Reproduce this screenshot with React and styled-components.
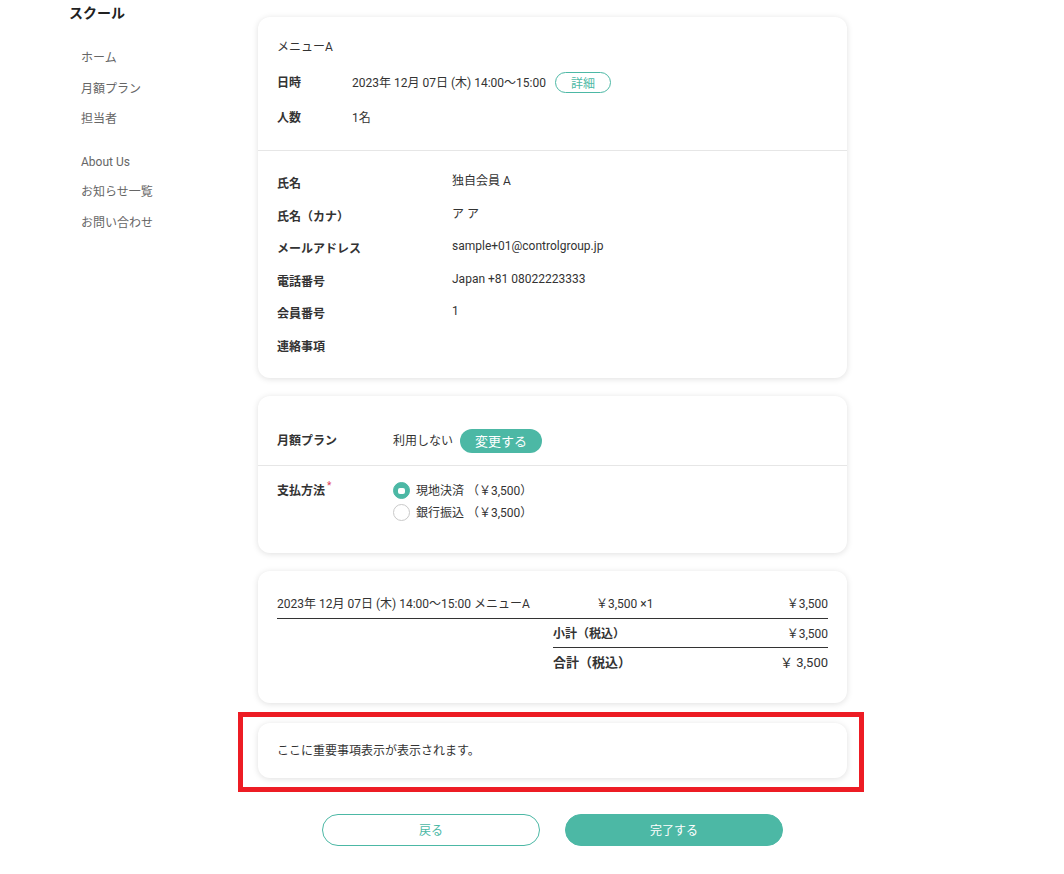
import React from "react";
import styled, { createGlobalStyle } from "styled-components";

const teal = "#4cb8a5";

const GlobalStyle = createGlobalStyle`
  body {
    margin: 0;
    background: #fff;
    color: #333;
    font-family: Roboto, "Noto Sans CJK JP", sans-serif;
    font-size: 12px;
  }
`;

const Page = styled.div`
  display: flex;
  padding-left: 69px;
`;

const Sidebar = styled.aside`
  width: 189px;
  flex-shrink: 0;
  padding-top: 3px;
`;

const SchoolName = styled.h1`
  margin: 0;
  font-size: 14px;
  line-height: 20px;
  font-weight: 700;
  color: #222;
`;

const NavGroup = styled.ul`
  list-style: none;
  margin: ${(p) => (p.$first ? "20px" : "12px")} 0 0;
  padding: 0 0 0 12px;
`;

const NavItem = styled.li`
  line-height: 30.5px;
  font-size: 12px;
  color: #666;
`;

const Main = styled.main`
  width: 589px;
  padding-top: 17px;
  padding-bottom: 30px;
`;

const Card = styled.section`
  background: #fff;
  border-radius: 12px;
  box-shadow: 0 1px 6px rgba(0, 0, 0, 0.13);
  & + & {
    margin-top: 18px;
  }
`;

const Section = styled.div`
  padding: ${(p) => p.$pad};
  & + & {
    border-top: 1px solid #e6e6e6;
  }
`;

const MenuTitle = styled.div`
  line-height: 20px;
  margin-bottom: 15px;
`;

const InfoRow = styled.div`
  display: flex;
  align-items: center;
  min-height: 20px;
  & + & {
    margin-top: 15px;
  }
`;

const InfoLabel = styled.div`
  width: 75px;
  flex-shrink: 0;
  font-weight: 700;
  line-height: 20px;
`;

const InfoValue = styled.div`
  line-height: 20px;
`;

const OutlinePill = styled.button`
  margin-left: 9px;
  width: 56px;
  height: 21px;
  border: 1px solid ${teal};
  border-radius: 11px;
  background: #fff;
  color: ${teal};
  font-family: inherit;
  font-size: 12px;
  padding: 0;
  cursor: pointer;
`;

const MemberGrid = styled.div`
  display: grid;
  grid-template-columns: 175px 1fr;
  row-gap: 12.5px;
  line-height: 20px;
`;

const MemberLabel = styled.div`
  font-weight: 700;
`;

const MemberValue = styled.div`
  margin-top: -3px;
`;

const PlanRow = styled.div`
  display: flex;
  align-items: ${(p) => (p.$top ? "flex-start" : "center")};
`;

const PlanLabel = styled.div`
  width: 116px;
  flex-shrink: 0;
  font-weight: 700;
  line-height: 22px;
`;

const Required = styled.sup`
  color: #e0405a;
  font-size: 10px;
  font-weight: 400;
  margin-left: 2px;
  vertical-align: 6px;
  line-height: 0;
`;

const FilledPill = styled.button`
  margin-left: 7px;
  width: 82px;
  height: 24px;
  border: none;
  border-radius: 12px;
  background: ${teal};
  color: #fff;
  font-family: inherit;
  font-size: 13px;
  padding: 0;
  cursor: pointer;
`;

const RadioList = styled.div`
  display: flex;
  flex-direction: column;
`;

const RadioOption = styled.label`
  display: flex;
  align-items: center;
  gap: 6px;
  line-height: 22px;
  font-size: 12px;
`;

const RadioDot = styled.span`
  width: 17px;
  height: 17px;
  box-sizing: border-box;
  border-radius: 50%;
  display: flex;
  align-items: center;
  justify-content: center;
  background: ${(p) => (p.$checked ? teal : "#fff")};
  border: 1px solid ${(p) => (p.$checked ? teal : "#c9c9c9")};
  &::after {
    content: "";
    display: ${(p) => (p.$checked ? "block" : "none")};
    width: 7px;
    height: 6px;
    border-radius: 2px;
    background: #fff;
  }
`;

const ItemRow = styled.div`
  display: grid;
  grid-template-columns: 319px 1fr auto;
  line-height: 20px;
  padding-bottom: 4px;
  border-bottom: 1px solid #333;
`;

const Summary = styled.div`
  width: 275px;
  margin-left: auto;
`;

const SumRow = styled.div`
  display: flex;
  justify-content: space-between;
  line-height: 20px;
  padding: ${(p) => p.$pad};
  border-bottom: ${(p) => (p.$line ? "1px solid #333" : "none")};
  font-size: ${(p) => (p.$big ? "13px" : "12px")};
`;

const SumLabel = styled.span`
  font-weight: 700;
`;

const Highlight = styled.div`
  margin: 9px -17px 0 -20px;
  border: 5px solid #ed1c24;
  padding: 6px 12px 9px 15px;
`;

const NoticeText = styled.p`
  margin: 0;
  line-height: 20px;
`;

const Actions = styled.div`
  display: flex;
  justify-content: center;
  gap: 25px;
  margin-top: 22px;
`;

const ActionButton = styled.button`
  width: 218px;
  height: 32px;
  border-radius: 16px;
  box-sizing: border-box;
  font-family: inherit;
  font-size: 12px;
  cursor: pointer;
  border: 1px solid ${teal};
  background: ${(p) => (p.$primary ? teal : "#fff")};
  color: ${(p) => (p.$primary ? "#fff" : teal)};
`;

const members = [
  ["氏名", "独自会員 A"],
  ["氏名（カナ）", "ア ア"],
  ["メールアドレス", "sample+01@controlgroup.jp"],
  ["電話番号", "Japan +81 08022223333"],
  ["会員番号", "1"],
  ["連絡事項", ""],
];

export default function App() {
  return (
    <>
      <GlobalStyle />
      <Page>
        <Sidebar>
          <SchoolName>スクール</SchoolName>
          <NavGroup $first>
            <NavItem>ホーム</NavItem>
            <NavItem>月額プラン</NavItem>
            <NavItem>担当者</NavItem>
          </NavGroup>
          <NavGroup>
            <NavItem>About Us</NavItem>
            <NavItem>お知らせ一覧</NavItem>
            <NavItem>お問い合わせ</NavItem>
          </NavGroup>
        </Sidebar>

        <Main>
          <Card>
            <Section $pad="20px 19px 22px">
              <MenuTitle>メニューA</MenuTitle>
              <InfoRow>
                <InfoLabel>日時</InfoLabel>
                <InfoValue>2023年 12月 07日 (木) 14:00〜15:00</InfoValue>
                <OutlinePill>詳細</OutlinePill>
              </InfoRow>
              <InfoRow>
                <InfoLabel>人数</InfoLabel>
                <InfoValue>1名</InfoValue>
              </InfoRow>
            </Section>
            <Section $pad="23px 19px 21px">
              <MemberGrid>
                {members.map(([label, value]) => (
                  <React.Fragment key={label}>
                    <MemberLabel>{label}</MemberLabel>
                    <MemberValue>{value}</MemberValue>
                  </React.Fragment>
                ))}
              </MemberGrid>
            </Section>
          </Card>

          <Card>
            <Section $pad="33px 19px 12px">
              <PlanRow>
                <PlanLabel>月額プラン</PlanLabel>
                <InfoValue>利用しない</InfoValue>
                <FilledPill>変更する</FilledPill>
              </PlanRow>
            </Section>
            <Section $pad="14px 19px 29px">
              <PlanRow $top>
                <PlanLabel>
                  支払方法<Required>*</Required>
                </PlanLabel>
                <RadioList>
                  <RadioOption>
                    <RadioDot $checked />
                    現地決済 （￥3,500）
                  </RadioOption>
                  <RadioOption>
                    <RadioDot />
                    銀行振込 （￥3,500）
                  </RadioOption>
                </RadioList>
              </PlanRow>
            </Section>
          </Card>

          <Card>
            <Section $pad="23px 19px 30px">
              <ItemRow>
                <span>2023年 12月 07日 (木) 14:00〜15:00 メニューA</span>
                <span>￥3,500 ×1</span>
                <span>￥3,500</span>
              </ItemRow>
              <Summary>
                <SumRow $line $pad="5px 0 3px">
                  <SumLabel>小計（税込）</SumLabel>
                  <span>￥3,500</span>
                </SumRow>
                <SumRow $big $pad="5px 0 0">
                  <SumLabel>合計（税込）</SumLabel>
                  <span>￥ 3,500</span>
                </SumRow>
              </Summary>
            </Section>
          </Card>

          <Highlight>
            <Card>
              <Section $pad="18px 19px 17px">
                <NoticeText>ここに重要事項表示が表示されます。</NoticeText>
              </Section>
            </Card>
          </Highlight>

          <Actions>
            <ActionButton>戻る</ActionButton>
            <ActionButton $primary>完了する</ActionButton>
          </Actions>
        </Main>
      </Page>
    </>
  );
}
